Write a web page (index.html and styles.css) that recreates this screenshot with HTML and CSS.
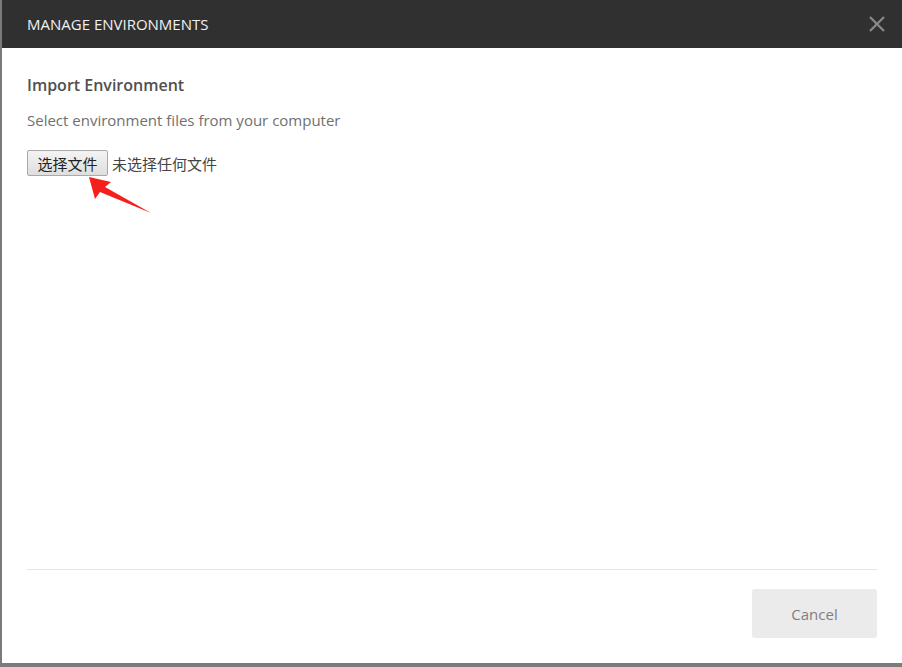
FILE: index.html
```html
<!DOCTYPE html>
<html>
<head>
<meta charset="utf-8">
<link rel="stylesheet" href="styles.css">
</head>
<body>
<div class="dialog">
  <div class="header">
    <span class="title">MANAGE ENVIRONMENTS</span>
    <svg class="close" width="18" height="18" viewBox="0 0 18 18"><path d="M2 2 L16 16 M16 2 L2 16" stroke="#8a8a8a" stroke-width="2.2" fill="none"/></svg>
  </div>
  <div class="content">
    <div class="heading">Import Environment</div>
    <div class="desc">Select environment files from your computer</div>
    <div class="file-row">
      <span class="file-btn">选择文件</span>
      <span class="file-none">未选择任何文件</span>
    </div>
  </div>
  <div class="footer">
    <button class="cancel">Cancel</button>
  </div>
</div>
<svg class="arrow" width="902" height="667" viewBox="0 0 902 667"><polygon points="89,177 111,182 105,187 151,213 100,192 95,199" fill="#f5201c"/></svg>
</body>
</html>
```
FILE: styles.css
```css
html, body {
  margin: 0;
  padding: 0;
  width: 902px;
  height: 667px;
  overflow: hidden;
  background: #7b7b7b;
}
body {
  padding-left: 2px;
  box-sizing: border-box;
  font-family: "Open Sans", "Noto Sans CJK SC", sans-serif;
}
.dialog {
  width: 900px;
  height: 663px;
  background: #fff;
  display: flex;
  flex-direction: column;
}
.header {
  height: 48px;
  background: #303030;
  display: flex;
  align-items: center;
  justify-content: space-between;
  padding: 0 16px 0 25px;
  flex-shrink: 0;
}
.title {
  color: #f0f0f0;
  font-size: 15px;
}
.close {
  display: block;
}
.content {
  flex: 1;
  padding: 26px 25px 0 25px;
}
.heading {
  font-size: 16px;
  line-height: 22px;
  color: #505050;
  font-weight: 600;
}
.desc {
  margin-top: 13px;
  font-size: 15px;
  line-height: 22px;
  color: #707070;
}
.file-row {
  margin-top: 19px;
  display: flex;
  align-items: center;
  gap: 4px;
  font-family: "Noto Sans CJK SC", sans-serif;
  font-size: 15px;
}
.file-btn {
  box-sizing: border-box;
  width: 81px;
  height: 26px;
  border: 1px solid #a9a9a9;
  border-radius: 2px;
  background: linear-gradient(#f4f4f4, #dedede);
  color: #222;
  display: flex;
  align-items: center;
  justify-content: center;
}
.file-none {
  color: #444;
}
.footer {
  margin: 0 25px;
  border-top: 1px solid #e6e6e6;
  padding: 19px 0 25px;
  display: flex;
  justify-content: flex-end;
}
.cancel {
  width: 125px;
  height: 49px;
  border: none;
  border-radius: 3px;
  background: #ebebeb;
  color: #808080;
  font-family: "Open Sans", sans-serif;
  font-size: 15px;
}
.arrow {
  position: absolute;
  left: 0;
  top: 0;
  pointer-events: none;
}
```
